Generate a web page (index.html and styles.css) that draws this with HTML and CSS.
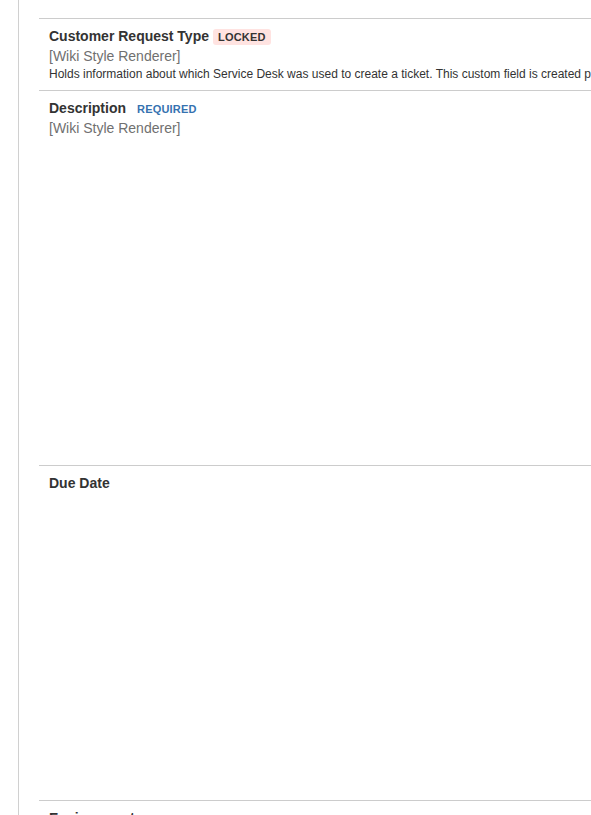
FILE: index.html
```html
<!DOCTYPE html>
<html>
<head>
<meta charset="utf-8">
<link rel="stylesheet" href="styles.css">
</head>
<body>
<div class="page">
  <div class="fields">
    <div class="field">
      <div class="field-title">Customer Request Type <span class="lozenge locked">Locked</span></div>
      <div class="renderer">[Wiki Style Renderer]</div>
      <div class="desc">Holds information about which Service Desk was used to create a ticket. This custom field is created programmatically and must not be modified.</div>
    </div>
    <div class="field field-description">
      <div class="field-title">Description <span class="lozenge required">Required</span></div>
      <div class="renderer">[Wiki Style Renderer]</div>
    </div>
    <div class="field field-due">
      <div class="field-title">Due Date</div>
    </div>
    <div class="field">
      <div class="field-title">Environment</div>
      <div class="renderer">[Wiki Style Renderer]</div>
    </div>
  </div>
</div>
</body>
</html>
```
FILE: styles.css
```css
html, body {
  margin: 0;
  padding: 0;
  background: #fff;
  overflow: hidden;
}
body {
  font-family: Arial, "Liberation Sans", sans-serif;
  color: #333;
  height: 815px;
}
.page {
  margin-left: 18px;
  border-left: 1px solid #d0d0d0;
  padding: 18px 0 0 20px;
  min-height: 815px;
  box-sizing: border-box;
}
.fields {
  width: 1200px;
}
.field {
  border-top: 1px solid #cccccc;
  padding: 7px 10px 8px;
}
.field-description {
  height: 359px;
}
.field-due {
  height: 319px;
}
.field-title {
  font-size: 14px;
  line-height: 20px;
  font-weight: bold;
  color: #333;
  display: flex;
  align-items: center;
}
.lozenge {
  font-size: 11px;
  line-height: 16px;
  font-weight: bold;
  text-transform: uppercase;
  padding: 0 5px;
  border-radius: 3px;
  margin-left: 4px;
  margin-top: 2px;
  letter-spacing: 0.2px;
}
.locked {
  background: #ffe3e1;
  color: #333;
}
.required {
  color: #3572b0;
  margin-left: 6px;
}
.renderer {
  font-size: 14px;
  line-height: 20px;
  color: #707070;
}
.desc {
  font-size: 12px;
  line-height: 16px;
  color: #333;
  white-space: nowrap;
}
```
